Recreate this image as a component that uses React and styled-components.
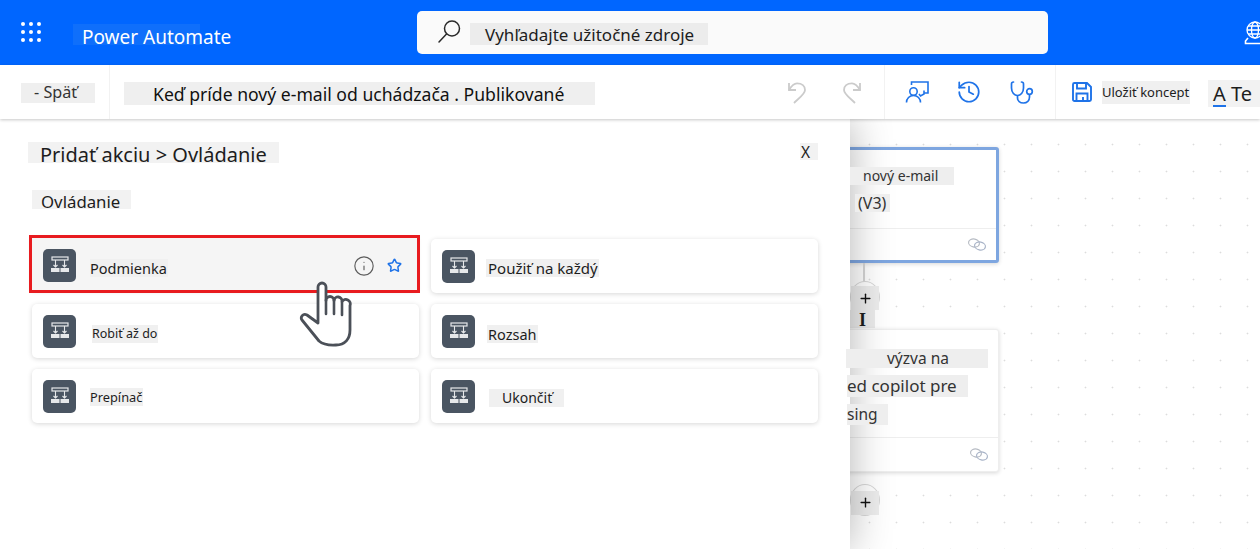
import React from "react"
import styled, { createGlobalStyle } from "styled-components"
import { History, Info, Star, Plus } from "lucide-react"

const GlobalStyle = createGlobalStyle`
    html, body {
        margin: 0;
        padding: 0;
        overflow: hidden;
        background: #fff;
    }
    * {
        box-sizing: border-box;
    }
`

const FlowIcon = () => (
    <svg width="20" height="20" viewBox="0 0 20 20" fill="none">
        <rect x="2" y="2" width="16" height="3" stroke="#e6e8ea" strokeWidth="1.2" />
        <path d="M5.5 5v7M14.5 5v7M3.5 10l2 2 2-2M12.5 10l2 2 2-2" stroke="#e6e8ea" strokeWidth="1.1" />
        <rect x="1" y="13" width="8.5" height="4" fill="#e6e8ea" />
        <rect x="10.5" y="13" width="8.5" height="4" fill="#e6e8ea" />
    </svg>
)

const SearchIcon = () => (
    <svg width="24" height="26" viewBox="0 0 24 26" fill="none" stroke="#2a2a2a" strokeWidth="1.5">
        <circle cx="15" cy="9.500" r="7.500" />
        <path d="M9.500 15 2 23" strokeLinecap="round" />
    </svg>
)

const GlobeIcon = () => (
    <svg width="18" height="24" viewBox="0 0 18 24" fill="none" stroke="#fff" strokeWidth="1.3">
        <circle cx="11" cy="9" r="8" />
        <ellipse cx="11" cy="9" rx="3.500" ry="8" />
        <path d="M3 9h16M4 5h14M4 13h14" />
        <path d="M4 17 1.500 20v2.500H19" strokeWidth="1.6" />
    </svg>
)

const UndoIcon = ({ $flip }) => (
    <FlipSvg $flip={$flip} width="24" height="24" viewBox="0 0 24 24" fill="none" stroke="#cbcbcb" strokeWidth="1.8">
        <path d="M3 3v7h7" />
        <path d="M3 10C6 5 8 3.300 11 3.300c5 0 8 2.700 8 6.700 0 4-6 8-11 13" />
    </FlipSvg>
)

const ReviewIcon = () => (
    <svg width="24" height="24" viewBox="0 0 24 24" fill="none" stroke="#1f73e8" strokeWidth="1.6">
        <path d="M6.500 5V2H23v11h-4" />
        <circle cx="8.500" cy="11.500" r="3.700" />
        <path d="M1.500 22.500c0-4 3-7 7-7s7 3 7 7" />
        <path d="M19 10.500v3.500l-3.500 2-1.500-2" />
    </svg>
)

const ScopeIcon = () => (
    <svg width="25" height="25" viewBox="0 0 25 25" fill="none" stroke="#1f73e8" strokeWidth="1.7">
        <path d="M4.500 2C3 2 2.500 3 2.500 4v4c0 4.500 3 7.500 6 7.500s6-3 6-7.500V4c0-1-.5-2-2-2" strokeLinecap="round" />
        <path d="M8.500 15.500v2.500c0 3 2.500 5 6 5s6-2.500 6-6v-3" />
        <circle cx="20.500" cy="11.500" r="2.800" />
    </svg>
)

const SaveIcon = () => (
    <svg width="20" height="20" viewBox="0 0 20 20" fill="none" stroke="#1f73e8" strokeWidth="1.9">
        <path d="M2.500 1h12.500L19 5v12.500a1.500 1.500 0 0 1-1.500 1.500h-15A1.500 1.500 0 0 1 1 17.500v-15A1.500 1.500 0 0 1 2.500 1z" />
        <path d="M5 1v5.500h9V1M4.500 19v-7.500h11V19M11 15v4" />
    </svg>
)

const LinkIcon = () => (
    <svg width="20" height="15" viewBox="0 0 20 15" fill="none" strokeWidth="1.2">
        <ellipse cx="7" cy="6" rx="5.500" ry="4" transform="rotate(12 7 6)" stroke="#b7bcc4" />
        <ellipse cx="13" cy="9" rx="5.500" ry="4" transform="rotate(12 13 9)" stroke="#a9b4c8" />
    </svg>
)

const HandCursor = () => (
    <HandSvg width="58" height="72" viewBox="0 0 58 72" fill="none">
        <path
            d="M19 45V9a4 4 0 0 1 8 0v13.500a4 4 0 0 1 8 0a4 4 0 0 1 8 1a4.500 4.500 0 0 1 8 4V52c0 9-5 15-14 15-8 .5-13-.5-17-4L3 42c-2-3 1-7 5-5z"
            fill="#fff"
            stroke="#4b5058"
            strokeWidth="2.8"
            strokeLinejoin="round"
        />
        <path d="M27 22v14M35 22v14M43 24v13" stroke="#4b5058" strokeWidth="2.6" strokeLinecap="round" />
    </HandSvg>
)

const actions = [
    { name: "Podmienka", size: 14.5, pad: 0, gap: 14, drop: 7, active: true },
    { name: "Použiť na každý", size: 15, pad: 2, gap: 11, drop: 3 },
    { name: "Robiť až do", size: 12.5, pad: 0, gap: 16, drop: 5 },
    { name: "Rozsah", size: 14.5, pad: 1, gap: 12, drop: 5 },
    { name: "Prepínač", size: 12.8, pad: 0, gap: 14, drop: 1 },
    { name: "Ukončiť", size: 14, pad: 13, gap: 14, drop: 3 },
]

const App = () => (
    <Page>
        <GlobalStyle />
        <Header>
            <Waffle>
                {Array.from({ length: 9 }).map((_, i) => <i key={i} />)}
            </Waffle>
            <Brand>Power Automate</Brand>
            <SearchBox>
                <SearchIcon />
                <SearchText>Vyhľadajte užitočné zdroje</SearchText>
            </SearchBox>
            <GlobeWrap>
                <GlobeIcon />
            </GlobeWrap>
        </Header>

        <Toolbar>
            <BackCell>
                <BackText>- Späť</BackText>
            </BackCell>
            <TitleCell>
                <FlowTitle>Keď príde nový e-mail od uchádzača . Publikované</FlowTitle>
            </TitleCell>
            <UndoGroup>
                <UndoIcon />
                <UndoIcon $flip />
            </UndoGroup>
            <ToolGroup>
                <ReviewIcon />
                <History size={26} strokeWidth={1.6} color="#1f73e8" />
                <ScopeIcon />
            </ToolGroup>
            <SaveGroup>
                <SaveIcon />
                <SaveText>Uložiť koncept</SaveText>
                <TestText><UnderA>A</UnderA> Te</TestText>
            </SaveGroup>
        </Toolbar>

        <Main>
            <Panel>
                <PanelHead>
                    <PanelTitle>Pridať akciu &gt; Ovládanie</PanelTitle>
                    <CloseText>X</CloseText>
                </PanelHead>
                <SectionTitle>Ovládanie</SectionTitle>
                <CardGrid>
                    {actions.map(a => (
                        <Card key={a.name} $active={a.active}>
                            <IconBox $active={a.active}><FlowIcon /></IconBox>
                            <CardLabel $size={a.size} $pad={a.pad} $gap={a.gap} $drop={a.drop}>{a.name}</CardLabel>
                            {a.active && (
                                <CardTools>
                                    <Info size={22} strokeWidth={1.25} color="#5c5c5c" />
                                    <Star size={15} strokeWidth={2.4} color="#1f73e8" />
                                </CardTools>
                            )}
                        </Card>
                    ))}
                </CardGrid>
                <HandCursor />
            </Panel>

            <Canvas>
                <Node $top={28} $height={116} $selected>
                    <NodeBody $pad={17} $gap={9}>
                        <NodeText $size={14} $pad={13} $left={0} $width={104} $height={18}>nový e-mail</NodeText>
                        <NodeText $size={16} $pad={3} $left={5} $width={35} $height={18}>(V3)</NodeText>
                    </NodeBody>
                    <NodeFoot $height={32}><LinkIcon /></NodeFoot>
                </Node>
                <Wire $top={144} $height={20} />
                <AddButton $top={162}><AddPatch $shift={2}><Plus size={15} strokeWidth={2.2} color="#111" /></AddPatch></AddButton>
                <Cursor $top={191}>I</Cursor>
                <Node $top={210} $height={143}>
                    <NodeBody $pad={19} $gap={7}>
                        <NodeText $size={15.5} $pad={41} $left={-2} $width={142} $height={19}>výzva na</NodeText>
                        <NodeText $size={17} $pad={0} $left={-1} $width={121} $height={22}>ed copilot pre</NodeText>
                        <NodeText $size={15.5} $pad={0} $left={-1} $width={41} $height={21}>sing</NodeText>
                    </NodeBody>
                    <NodeFoot $height={34}><LinkIcon /></NodeFoot>
                </Node>
                <AddButton $top={365}><AddPatch $shift={5}><Plus size={15} strokeWidth={2.2} color="#111" /></AddPatch></AddButton>
            </Canvas>
        </Main>
    </Page>
)

const Page = styled.div`
    width: 1260px;
    height: 549px;
    display: flex;
    flex-direction: column;
    overflow: hidden;
    font-family: "Noto Sans", "Open Sans", sans-serif;
    color: #1d1d1d;
`

const Header = styled.header`
    height: 65px;
    display: flex;
    align-items: center;
    background-color: #0066ff;
    color: #fff;
`

const Waffle = styled.div`
    width: 21px;
    flex: none;
    margin: 0 0 2px 21px;
    display: grid;
    grid-template-columns: repeat(3, 4px);
    grid-auto-rows: 4px;
    gap: 4px;
    i {
        background-color: #fff;
        border-radius: 50%;
    }
`

const Brand = styled.div`
    width: 127px;
    height: 21px;
    flex: none;
    margin: 4px 0 0 31px;
    padding-left: 9px;
    background-color: #0f6ffb;
    font-size: 19px;
    line-height: 26px;
    white-space: nowrap;
`

const SearchBox = styled.div`
    width: 631px;
    height: 43px;
    flex: none;
    margin: -1px 0 0 217px;
    padding-left: 20px;
    display: flex;
    align-items: center;
    background-color: #fafafa;
    border-radius: 5px;
    color: #1d1d1d;
`

const SearchText = styled.div`
    width: 238px;
    height: 22px;
    margin: 3px 0 0 9px;
    padding-left: 15px;
    background-color: #ececec;
    font-size: 17px;
    line-height: 23px;
    white-space: nowrap;
`

const GlobeWrap = styled.div`
    flex: none;
    margin-left: 196px;
    display: flex;
`

const Toolbar = styled.div`
    position: relative;
    z-index: 5;
    height: 54px;
    display: flex;
    align-items: center;
    background-color: #fff;
    box-shadow: 0 1px 3px rgba(0, 0, 0, .22);
`

const BackCell = styled.div`
    width: 110px;
    height: 100%;
    padding: 18px 0 0 21px;
    border-right: 1px solid #f2f2f2;
`

const BackText = styled.div`
    width: 74px;
    height: 20px;
    padding-left: 13px;
    background-color: #efefef;
    font-size: 16.2px;
    line-height: 19px;
    white-space: nowrap;
    color: #333;
`

const TitleCell = styled.div`
    width: 660px;
    padding-left: 14px;
`

const FlowTitle = styled.div`
    width: 471px;
    height: 23px;
    margin-top: 3px;
    padding-left: 29px;
    background-color: #efefef;
    font-size: 17.6px;
    line-height: 24px;
    white-space: nowrap;
    color: #111;
`

const FlipSvg = styled.svg`
    transform: ${p => (p.$flip ? "scaleX(-1)" : "none")};
`

const UndoGroup = styled.div`
    width: 114px;
    height: 100%;
    padding: 0 21px 0 16px;
    display: flex;
    align-items: center;
    justify-content: space-between;
`

const ToolGroup = styled.div`
    width: 172px;
    height: 100%;
    padding: 0 21px 0 20px;
    display: flex;
    align-items: center;
    justify-content: space-between;
    border-left: 1px solid #f2f2f2;
    border-right: 1px solid #f2f2f2;
`

const SaveGroup = styled.div`
    flex: 1;
    height: 100%;
    padding-left: 16px;
    display: flex;
    align-items: center;
`

const SaveText = styled.div`
    width: 88px;
    height: 23px;
    margin-left: 10px;
    background-color: #f0f0f0;
    font-size: 13px;
    line-height: 23px;
    white-space: nowrap;
`

const TestText = styled.div`
    flex: 1;
    height: 27px;
    margin: 3px 0 0 18px;
    padding-left: 5px;
    background-color: #f2f2f2;
    font-size: 20px;
    line-height: 27px;
    white-space: nowrap;
`

const UnderA = styled.span`
    display: inline-block;
    height: 27px;
    border-bottom: 2px solid #1f73e8;
`

const Main = styled.div`
    flex: 1;
    display: flex;
    min-height: 0;
`

const Panel = styled.section`
    position: relative;
    z-index: 2;
    width: 850px;
    padding: 23px 32px 0 28px;
    background-color: #fff;
    box-shadow: 0 0 40px rgba(0, 0, 0, .3);
`

const PanelHead = styled.div`
    display: flex;
    justify-content: space-between;
    align-items: flex-start;
`

const PanelTitle = styled.h1`
    width: 251px;
    height: 21px;
    margin: 0;
    padding-left: 12px;
    background-color: #f2f2f2;
    font-size: 20px;
    font-weight: 400;
    line-height: 26px;
    white-space: nowrap;
    overflow: hidden;
`

const CloseText = styled.div`
    width: 18px;
    height: 17px;
    margin-top: 1px;
    padding-left: 1px;
    background-color: #f2f2f2;
    font-size: 15.5px;
    line-height: 19px;
`

const SectionTitle = styled.h2`
    width: 99px;
    height: 19px;
    margin: 27px 0 0 4px;
    padding-left: 9px;
    background-color: #f2f2f2;
    font-size: 16.8px;
    font-weight: 400;
    line-height: 23px;
    overflow: hidden;
`

const CardGrid = styled.div`
    margin: 30px 0 0 4px;
    display: grid;
    grid-template-columns: 387px 387px;
    grid-auto-rows: 54px;
    gap: 11px 12px;
`

const Card = styled.div`
    display: flex;
    align-items: center;
    padding-left: 11px;
    background-color: ${p => (p.$active ? "#f5f5f5" : "#fff")};
    box-shadow: 0 1px 5px rgba(0, 0, 0, .16);
    outline: ${p => (p.$active ? "3px solid #e81b1f" : "none")};
    border-radius: ${p => (p.$active ? "0" : "5px")};
    margin: ${p => (p.$active ? "-1px 2px 3px 0" : "0")};
`

const IconBox = styled.div`
    width: 33px;
    height: 33px;
    flex: none;
    margin-top: ${p => (p.$active ? "2px" : "0")};
    display: flex;
    align-items: center;
    justify-content: center;
    border-radius: 5px;
    background-color: #4a5562;
`

const CardLabel = styled.div`
    margin: ${p => p.$drop}px 0 0 ${p => p.$gap}px;
    padding-left: ${p => p.$pad}px;
    padding-right: ${p => (p.$pad > 5 ? 12 : 1)}px;
    background-color: #f0f0f0;
    font-size: ${p => p.$size}px;
    line-height: 18px;
    white-space: nowrap;
`

const CardTools = styled.div`
    margin: 3px 0 0 auto;
    padding-right: 15px;
    width: 64px;
    display: flex;
    align-items: center;
    justify-content: space-between;
`

const HandSvg = styled.svg`
    position: absolute;
    left: 299px;
    top: 159px;
`

const Canvas = styled.div`
    position: relative;
    flex: 1;
    background-color: #fff;
    background-image: radial-gradient(circle, #dcdcdc 0.8px, transparent 1.1px);
    background-size: 27px 27px;
    background-position: 6px 12px;
`

const Node = styled.div`
    position: absolute;
    top: ${p => p.$top}px;
    left: -150px;
    width: 299px;
    height: ${p => p.$height}px;
    display: flex;
    flex-direction: column;
    background-color: #fff;
    border-radius: 3px;
    border: ${p => (p.$selected ? "3px solid #7ea6e0" : "1px solid #eee")};
    box-shadow: 0 1px 4px rgba(0, 0, 0, .16);
`

const NodeBody = styled.div`
    flex: 1;
    padding: ${p => p.$pad}px 0 0 147px;
    display: flex;
    flex-direction: column;
    gap: ${p => p.$gap}px;
`

const NodeText = styled.div`
    position: relative;
    z-index: 3;
    width: ${p => p.$width}px;
    height: ${p => p.$height}px;
    margin-left: ${p => p.$left}px;
    padding-left: ${p => p.$pad}px;
    background-color: #eeeeee;
    font-size: ${p => p.$size}px;
    line-height: ${p => p.$height}px;
    white-space: nowrap;
    color: #333;
`

const NodeFoot = styled.div`
    height: ${p => p.$height}px;
    flex: none;
    padding-right: 9px;
    display: flex;
    align-items: center;
    justify-content: flex-end;
    border-top: 1px solid #eeeeee;
`

const Wire = styled.div`
    position: absolute;
    top: ${p => p.$top}px;
    left: 13px;
    width: 2px;
    height: ${p => p.$height}px;
    background-color: #d5d5d5;
`

const AddButton = styled.div`
    position: absolute;
    top: ${p => p.$top}px;
    left: 0;
    width: 30px;
    height: 32px;
    display: flex;
    align-items: center;
    justify-content: center;
    background-color: #fff;
    border: 1px solid #d8d8d8;
    border-radius: 50%;
`

const AddPatch = styled.div`
    width: 28px;
    height: 24px;
    margin-top: ${p => p.$shift}px;
    flex: none;
    display: flex;
    align-items: center;
    justify-content: center;
    background-color: #ededed;
`

const Cursor = styled.div`
    position: absolute;
    top: ${p => p.$top}px;
    left: 0;
    width: 25px;
    height: 18px;
    background-color: #ececec;
    font-family: "Liberation Serif", serif;
    font-size: 18px;
    font-weight: 700;
    line-height: 20px;
    text-align: center;
`

export default App
